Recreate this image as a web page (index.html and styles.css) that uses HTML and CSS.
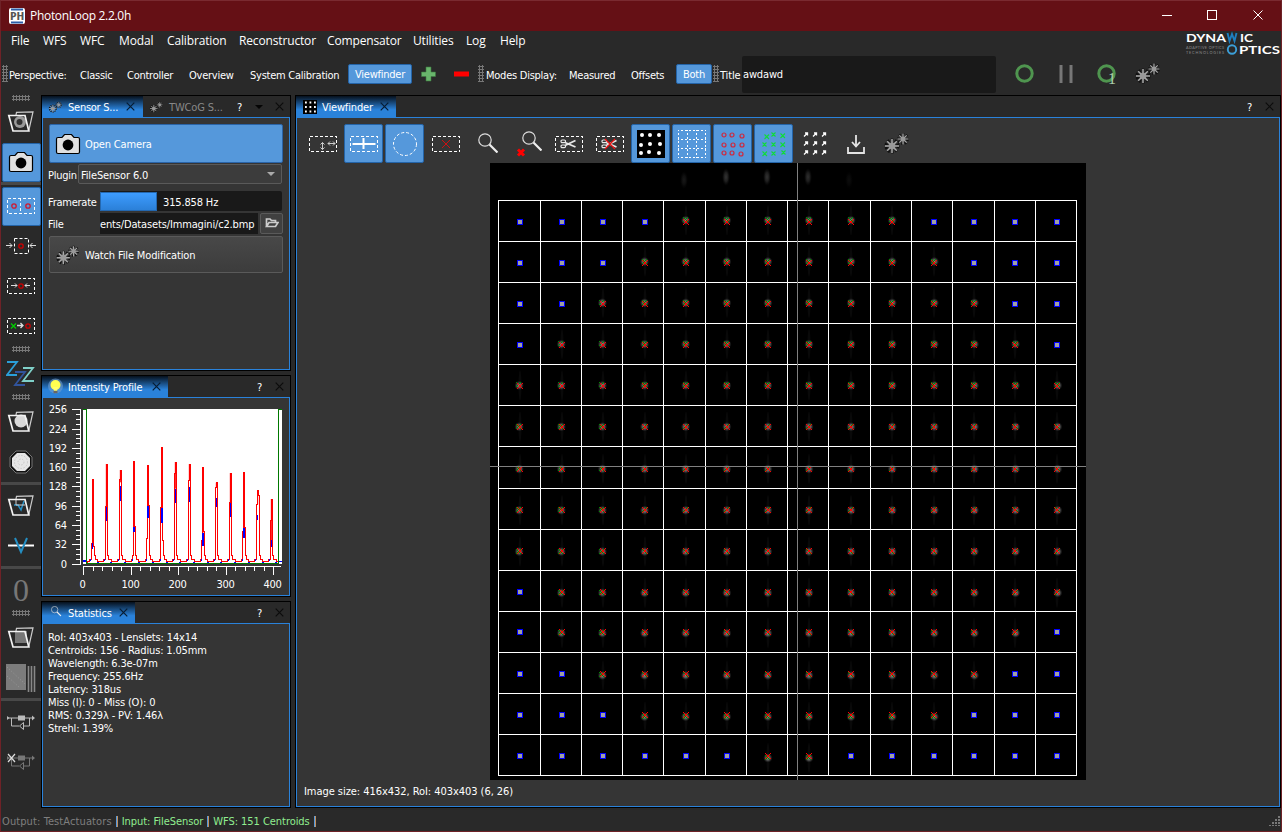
FILE: index.html
```html
<!DOCTYPE html>
<html lang="en">
<head>
<meta charset="utf-8">
<title>PhotonLoop 2.2.0h</title>
<link rel="stylesheet" href="styles.css">
</head>
<body>
<svg class="defs" width="0" height="0" aria-hidden="true">
  <defs>
    <symbol id="gears" viewBox="0 0 28 24">
      <g stroke="#111" fill="none"><circle cx="9" cy="15" r="6" stroke-width="3" stroke-dasharray="2.2 1.6"/><circle cx="20" cy="8" r="4.6" stroke-width="2.6" stroke-dasharray="2 1.4"/></g>
      <g stroke="#aaa" stroke-width="1.5"><path d="M9 8V22M2 15H16M4.2 10.2L13.8 19.8M4.2 19.8L13.8 10.2"/><path d="M20 2.5V13.5M14.5 8H25.500M16.300 4.300L23.700 11.700M16.300 11.700L23.700 4.300" stroke-width="1.2"/></g>
      <circle cx="9" cy="15" r="3.200" fill="#999"/><circle cx="20" cy="8" r="2.200" fill="#999"/>
    </symbol>
    <symbol id="camera" viewBox="0 0 26 22">
      <path d="M3 4.500H7L9.500 1.500H16.500L19 4.500H23Q24.500 4.500 24.500 6V19Q24.500 20.500 23 20.500H3Q1.500 20.500 1.500 19V6Q1.500 4.500 3 4.500Z" fill="#e0e0e0" stroke="#000" stroke-width="1.200"/>
      <circle cx="13" cy="12" r="5.400" fill="#000"/>
    </symbol>
    <symbol id="layers" viewBox="0 0 28 24">
      <path d="M9 5L9.500 2.300L26 1.800L21.800 20.500" fill="none" stroke="#ccc" stroke-width="1.200"/>
      <path d="M1.800 5.500H18L21.800 21H6Z" fill="none" stroke="#f2f2f2" stroke-width="1.700"/>
    </symbol>
    <symbol id="dash" viewBox="0 0 28 16">
      <rect x=".5" y=".5" width="27" height="15" fill="none" stroke="#fff" stroke-dasharray="3 2" shape-rendering="crispEdges"/>
    </symbol>
    <symbol id="lens" viewBox="0 0 20 20">
      <circle cx="7" cy="7" r="6.200" fill="none" stroke="#ddd" stroke-width="1.200"/><path d="M11.500 11.500L19.500 19.500" stroke="#eee" stroke-width="2.200"/>
    </symbol>
    <symbol id="scissors" viewBox="0 0 16 10">
      <path d="M5 3.500L15.500 8M5 6.500L15.500 1.500" stroke="#e8e8e8" stroke-width="1.800"/><rect x="1" y="1" width="4.500" height="2.600" rx="1.200" fill="none" stroke="#e8e8e8" stroke-width="1.200"/><rect x="1" y="6" width="4.500" height="2.600" rx="1.200" fill="none" stroke="#e8e8e8" stroke-width="1.200"/>
    </symbol>
    <symbol id="close" viewBox="0 0 9 9"><path d="M.7 .7L8.300 8.300M8.300 .7L.7 8.300" stroke="currentColor" stroke-width="1.200"/></symbol>
    <symbol id="loop" viewBox="0 0 28 18">
      <path d="M0 5H27M4.500 5V13H12M16 13H22.500V5" fill="none" stroke="currentColor"/><path d="M25 2.500L28 5L25 7.500M0 3L2.500 5L0 7" fill="currentColor"/><rect x="11" y="2.500" width="7" height="5" fill="currentColor"/><path d="M16.500 9.500V16.500L12.500 13Z" fill="#292929" stroke="currentColor"/>
    </symbol>
  </defs>
</svg>
<div class="window">
  <header class="titlebar">
    <svg class="app-icon" width="16" height="16"><rect width="16" height="16" rx="2" fill="#fff"/><path d="M2 1.500H14M2 14.500H14" stroke="#2c5fa8" stroke-width="2"/><text x="1" y="12" font-size="11" font-weight="bold" textLength="14" lengthAdjust="spacingAndGlyphs" fill="#555">PH</text></svg>
    <span class="app-title">PhotonLoop 2.2.0h</span>
    <svg class="win-controls" width="106" height="12" fill="none" stroke="#fff"><path d="M0 5.500H10"/><rect x="45.500" y=".5" width="9" height="9"/><path d="M91.500 .5L100.500 9.500M100.500 .5L91.500 9.500"/></svg>
  </header>

  <div class="top">
    <nav class="menubar"><span>File</span><span>WFS</span><span>WFC</span><span>Modal</span><span>Calibration</span><span>Reconstructor</span><span>Compensator</span><span>Utilities</span><span>Log</span><span>Help</span></nav>
    <svg class="logo" width="96" height="30" viewBox="0 -3 96 30">
      <g fill="#fff" font-size="12" font-weight="bold"><text x="1" y="9.500" textLength="40" lengthAdjust="spacingAndGlyphs">DYNA</text><text x="55" y="9.500" textLength="13" lengthAdjust="spacingAndGlyphs">IC</text><text x="54" y="22" textLength="41" lengthAdjust="spacingAndGlyphs">PTICS</text></g>
      <path d="M42.500 1L44.500 9L47 2L49.500 9L51.500 1" fill="none" stroke="#1e7fc0" stroke-width="1.900"/>
      <circle cx="47" cy="17.500" r="4.200" fill="none" stroke="#3c9fd8" stroke-width="1.900"/>
      <g fill="#8a8a8a" font-size="3.800"><text x="1" y="17" textLength="38">ADAPTIVE OPTICS</text><text x="1" y="21.500" textLength="38">TECHNOLOGIES</text></g>
    </svg>
  </div>

  <div class="toolbar">
    <i class="grip-v"></i>
    <div class="perspectives"><span>Perspective:</span><span>Classic</span><span>Controller</span><span>Overview</span><span>System Calibration</span></div>
    <span class="chip chip-view">Viewfinder</span>
    <svg class="plus-minus" width="50" height="16"><path d="M6 1H11V6H15.500V10.500H11V15H6V10.500H1.500V6H6Z" fill="#69b56c" stroke="#3d7a40" stroke-width=".6"/><rect x="34" y="5.500" width="15" height="5" fill="#f00"/></svg>
    <i class="grip-v"></i>
    <div class="modes"><span>Modes Display:</span><span>Measured</span><span>Offsets</span></div>
    <span class="chip chip-both">Both</span>
    <i class="grip-v"></i>
    <span class="title-label">Title</span>
    <span class="title-input">awdawd</span>
    <svg class="run-icons" width="150" height="28">
      <g fill="none" stroke="#4f954f" stroke-width="3"><circle cx="10.500" cy="13.500" r="7.700"/><circle cx="92.500" cy="13.500" r="7.700"/></g>
      <path d="M47 5V23M57 5V23" stroke="#777" stroke-width="3"/>
      <text x="94" y="24" class="serif" font-size="16" fill="#a9cfa9">1</text>
      <use href="#gears" x="120" y="1" width="28" height="24"/>
    </svg>
  </div>

  <main class="work">
    <aside class="rail">
      <i class="grip-h"></i>
      <div class="slot"><svg width="28" height="24"><circle cx="13" cy="12" r="6" fill="#999"/><circle cx="12.500" cy="12" r="3" fill="#333"/><use href="#layers" width="28" height="24"/></svg></div>
      <div class="slot"><div class="btn-on"><svg width="26" height="22"><use href="#camera"/></svg></div></div>
      <i class="sep"></i>
      <div class="slot"><div class="btn-on"><svg width="28" height="16"><use href="#dash" width="28" height="16"/><path d="M13.500 0V16" stroke="#fff" stroke-dasharray="3 2"/><g fill="none" stroke="#d01830" stroke-width="1.300"><circle cx="7" cy="8" r="2.200"/><circle cx="21" cy="8" r="2.200"/></g></svg></div></div>
      <div class="slot"><svg width="30" height="16"><rect x="8.500" y=".5" width="14" height="15" fill="none" stroke="#fff" stroke-dasharray="3 2"/><circle cx="15" cy="8" r="2.200" fill="none" stroke="#c00" stroke-width="1.300"/><path d="M0 7.500H6M3.500 5L6 7.500L3.500 10M30 7.500H24M26.500 5L24 7.500L26.500 10" fill="none" stroke="#ddd"/></svg></div>
      <div class="slot"><svg width="28" height="16"><use href="#dash" width="28" height="16"/><circle cx="14" cy="8" r="2.200" fill="none" stroke="#c00" stroke-width="1.300"/><path d="M4 7.500H10M8 5.500L10 7.500L8 9.500M23 7.500H18M20 5.500L18 7.500L20 9.500" fill="none" stroke="#ddd"/></svg></div>
      <div class="slot"><svg width="28" height="16"><use href="#dash" width="28" height="16"/><circle cx="21" cy="8" r="2.200" fill="none" stroke="#c00" stroke-width="1.300"/><path d="M4 5.500L9 10.500M9 5.500L4 10.500" stroke="#0c0" stroke-width="1.300"/><path d="M10 7.500H16M13.500 5L16 7.500L13.500 10" fill="none" stroke="#ddd" stroke-width="1.300"/></svg></div>
      <i class="grip-h"></i>
      <div class="slot"><svg width="30" height="28" fill="none" stroke-width="1.800"><path d="M1 3H11L1 16H11" stroke="#2b9fd8"/><path d="M9 13H19L9 26H19" stroke="#31549c"/><path d="M17 9H27L17 22H28" stroke="#7fd0c8"/></svg></div>
      <i class="grip-h gap"></i>
      <div class="slot"><svg width="28" height="24"><circle cx="14" cy="11" r="6.500" fill="#d8d8d8"/><use href="#layers" width="28" height="24"/></svg></div>
      <div class="slot"><svg width="24" height="24"><path d="M7 1H17L23 7V17L17 23H7L1 17V7Z" fill="#111" stroke="#777"/><path d="M8 3H16L21 8V16L16 21H8L3 16V8Z" fill="#e6e6e6"/><g fill="none" stroke="#c8c8c8" stroke-dasharray="1.500 1.500"><circle cx="12" cy="12" r="6.500"/><circle cx="12" cy="12" r="3"/></g></svg></div>
      <i class="sep"></i>
      <div class="slot"><svg width="28" height="24"><path d="M7 11H11L14 16L17 7" fill="none" stroke="#248fc4" stroke-width="1.500"/><path d="M9 11V5M9 11H18" stroke="#ccc"/><use href="#layers" width="28" height="24"/></svg></div>
      <div class="slot"><svg width="26" height="18" fill="none"><path d="M0 8.500H26" stroke="#fff" stroke-width="2"/><path d="M7 1L10 8L13 15L16 8L19 1" stroke="#248fc4" stroke-width="2"/></svg></div>
      <i class="sep"></i>
      <div class="slot zero">0</div>
      <i class="grip-h last"></i>
      <div class="slot"><svg width="28" height="24"><rect x="8" y="5" width="12" height="12" fill="#777"/><use href="#layers" width="28" height="24"/></svg></div>
      <div class="slot"><svg width="30" height="28"><rect width="20" height="26" fill="#7c7c7c"/><path d="M1 3L19 20M1 12L14 24" stroke="#999" stroke-dasharray="1 2"/><path d="M22.500 2V28M25.500 2V28M28.500 2V28" stroke="#888" stroke-width="1.600"/></svg></div>
      <i class="sep"></i>
      <div class="slot loop-on"><svg width="28" height="18"><use href="#loop"/></svg></div>
      <div class="slot loop-off"><svg width="28" height="18"><use href="#loop"/><path d="M1 1L8 9M8 1L1 9" stroke="#ddd" stroke-width="1.200"/></svg></div>
    </aside>

    <div class="side">
      <section class="dock sensor">
        <div class="tabs">
          <div class="tab"><svg width="15" height="14"><use href="#gears"/></svg><span>Sensor S...</span><svg class="x" width="9" height="9"><use href="#close"/></svg></div>
          <div class="tab off"><svg width="15" height="14"><use href="#gears"/></svg><span>TWCoG S...</span></div>
          <span class="help">?</span><i class="drop"></i><svg class="x" width="9" height="9"><use href="#close"/></svg>
        </div>
        <div class="pane">
          <div class="big blue"><svg width="26" height="22"><use href="#camera"/></svg><span>Open Camera</span></div>
          <div class="field plugin"><span>Plugin</span><div class="combo">FileSensor 6.0<i></i></div></div>
          <div class="field rate"><span>Framerate</span><div class="bar"><i></i><b>315.858 Hz</b></div></div>
          <div class="field file"><span>File</span><div class="path">ents/Datasets/Immagini/c2.bmp</div><div class="folder"><svg width="14" height="12"><path d="M1.500 9.500V2H5L6.500 3.500H10.500V5.500M1.500 9.500L4 5.500H13L10.500 9.500Z" fill="none" stroke="#ccc" stroke-width="1.700"/></svg></div></div>
          <div class="big"><svg width="28" height="24"><use href="#gears"/></svg><span>Watch File Modification</span></div>
        </div>
      </section>

      <section class="dock intensity">
        <div class="tabs">
          <div class="tab"><svg width="15" height="18"><circle cx="7.500" cy="8" r="7.500" fill="#6f9fd0" opacity=".6"/><circle cx="7.500" cy="7" r="5" fill="#ffff50"/><path d="M5 9H10L9 13H6Z" fill="#ffff70"/><path d="M5.500 14H9.500" stroke="#666" stroke-width="2.500"/></svg><span>Intensity Profile</span><svg class="x" width="9" height="9"><use href="#close"/></svg></div>
          <span class="help">?</span><svg class="x" width="9" height="9"><use href="#close"/></svg>
        </div>
        <div class="pane"><svg id="profile" width="246" height="196" viewBox="9 84 738 588"></svg></div>
      </section>

      <section class="dock stats">
        <div class="tabs">
          <div class="tab"><svg width="15" height="15"><g transform="translate(3 1) scale(.52)"><use href="#lens" width="20" height="20"/></g></svg><span>Statistics</span><svg class="x" width="9" height="9"><use href="#close"/></svg></div>
          <span class="help">?</span><svg class="x" width="9" height="9"><use href="#close"/></svg>
        </div>
        <div class="pane">
          <p><span>RoI: 403x403 - Lenslets: 14x14</span></p><p><span>Centroids: 156 - Radius: 1.05mm</span></p><p><span>Wavelength: 6.3e-07m</span></p><p><span>Frequency: 255.6Hz</span></p><p><span>Latency: 318us</span></p><p><span>Miss (I): 0 - Miss (O): 0</span></p><p><span>RMS: 0.329λ - PV: 1.46λ</span></p><p><span>Strehl: 1.39%</span></p>
        </div>
      </section>
    </div>

    <section class="dock viewer">
      <div class="tabs">
        <div class="tab"><svg width="14" height="14"><rect width="14" height="14" fill="#000"/><path d="M2 2.500H13M2 7H13M2 11.500H13" stroke="#fff" stroke-width="1.800" stroke-dasharray="1.800 2.700"/></svg><span>Viewfinder</span><svg class="x" width="9" height="9"><use href="#close"/></svg></div>
        <span class="help">?</span><svg class="x" width="9" height="9"><use href="#close"/></svg>
      </div>
      <div class="pane">
        <div class="tools">
          <div class="tool"><svg width="28" height="28"><use href="#dash" y="6" width="28" height="16"/><path d="M13.500 12.500V19.500M11.500 14.500L13.500 12.500L15.500 14.500M11.500 17.500L13.500 19.500L15.500 17.500M19 13.500H26M21 11.500L19 13.500L21 15.500M24 11.500L26 13.500L24 15.500" fill="none" stroke="#ccc"/></svg></div>
          <div class="tool on"><svg width="28" height="28"><use href="#dash" y="6" width="28" height="16"/><path d="M2.500 14H25.500M13.500 8V19" stroke="#fff" stroke-width="2"/></svg></div>
          <div class="tool on"><svg width="28" height="28"><circle cx="14" cy="14" r="11.500" fill="none" stroke="#fff" stroke-dasharray="3 2"/></svg></div>
          <div class="tool"><svg width="28" height="28"><use href="#dash" y="6" width="28" height="16"/><path d="M10 10L18 18M18 10L10 18" stroke="#d01010"/></svg></div>
          <div class="tool"><svg width="28" height="28"><use href="#lens" x="5" y="3" width="20" height="20"/></svg></div>
          <div class="tool"><svg width="28" height="28"><use href="#lens" x="8" y="1" width="20" height="20"/><path d="M4 19.500L10 25.500M10 19.500L4 25.500" stroke="#f00" stroke-width="3"/></svg></div>
          <div class="tool"><svg width="28" height="28"><use href="#dash" y="6" width="28" height="16"/><use href="#scissors" x="5" y="9" width="16" height="10"/></svg></div>
          <div class="tool"><svg width="28" height="28"><use href="#dash" y="6" width="28" height="16"/><use href="#scissors" x="5" y="9" width="16" height="10"/><path d="M9 9L19 19M19 9L9 19" stroke="#f01010" stroke-width="1.300"/></svg></div>
          <div class="tool on"><svg width="28" height="28"><rect width="28" height="28" fill="#000"/><g fill="#fff"><circle cx="5" cy="5" r="2"/><circle cx="13" cy="5" r="2"/><circle cx="22" cy="5" r="2"/><circle cx="4" cy="15" r="2"/><circle cx="13" cy="14" r="2"/><circle cx="23" cy="14" r="2"/><circle cx="4" cy="23" r="2"/><circle cx="12" cy="22" r="2"/><circle cx="22" cy="23" r="2"/></g></svg></div>
          <div class="tool on"><svg width="28" height="28"><path d="M0 .5H28M0 9.500H28M0 18.500H28M0 27.500H28M.5 0V28M9.500 0V28M18.500 0V28M27.500 0V28" stroke="#fff" stroke-dasharray="2 2" stroke-dashoffset="1" shape-rendering="crispEdges"/></svg></div>
          <div class="tool on"><svg width="28" height="28" fill="none" stroke="#d0283c" stroke-width="1.200"><circle cx="5" cy="5" r="2"/><circle cx="13" cy="5" r="2"/><circle cx="23" cy="6" r="2"/><circle cx="5" cy="15" r="2"/><circle cx="14" cy="15" r="2"/><circle cx="23" cy="15" r="2"/><circle cx="5" cy="23" r="2"/><circle cx="13" cy="23" r="2"/><circle cx="22" cy="24" r="2"/></svg></div>
          <div class="tool on"><svg width="28" height="28"><path d="M4.500 4.500L9 9M9 4.500L4.500 9M11.500 2.500L15.500 6.500M15.500 2.500L11.500 6.500M20.500 3.500L25 8M25 3.500L20.500 8M2.500 12.500L6.500 16.500M6.500 12.500L2.500 16.500M11.500 12.500L15.500 16.500M15.500 12.500L11.500 16.500M20.500 12.500L25 17M25 12.500L20.500 17M2.500 21.500L7 26M7 21.500L2.500 26M11.500 21.500L15.500 25.500M15.500 21.500L11.500 25.500M21.500 20.500L25.500 24.500M25.500 20.500L21.500 24.500" stroke="#10dc38" stroke-width="1.100"/></svg></div>
          <div class="tool"><svg width="28" height="28"><g fill="none" stroke="#fff" stroke-width="1.300"><path d="M3 6.500L6 3.500M4 3H6.500V5.500M12 6.500L15 3.500M13 3H15.500V5.500M21 6.500L24 3.500M22 3H24.500V5.500"/><path d="M3 15.500L6 12.500M4 12H6.500V14.500M12 15.500L15 12.500M13 12H15.500V14.500M21 15.500L24 12.500M22 12H24.500V14.500"/><path d="M3 24.500L6 21.500M4 21H6.500V23.500M12 24.500L15 21.500M13 21H15.500V23.500M21 24.500L24 21.500M22 21H24.500V23.500"/></g></svg></div>
          <div class="tool"><svg width="28" height="28" fill="none" stroke="#e4e4e4" stroke-width="1.800"><path d="M14 5V17M10 12L14 16.500L18 12M6 17V23H22V17"/></svg></div>
          <div class="tool"><svg width="28" height="28"><use href="#gears" y="1" width="28" height="24"/></svg></div>
        </div>
        <div class="stage"><svg id="sensor" width="596" height="617" viewBox="490 163 596 617"></svg></div>
        <div class="caption"><span>Image size: 416x432, RoI: 403x403 (6, 26)</span></div>
      </div>
    </section>
  </main>

  <footer class="status"><span class="muted">Output: TestActuators</span><i></i><span>Input: FileSensor</span><i></i><span>WFS: 151 Centroids</span><i></i><svg class="resize" width="12" height="12"><path d="M10 1V11M7 4V11M4 7V11M1 10V11" stroke="#777" stroke-width="2" stroke-dasharray="2 1"/></svg></footer>
</div>
<script src="plots.js"></script>
</body>
</html>
```

FILE: styles.css
```css
* { box-sizing: border-box; }
body { margin: 0; background: #292929; }
.defs { position: absolute; }
svg { display: block; flex: none; font-family: "Open Sans", sans-serif; }
p { margin: 0; }

.window {
  width: 1282px; height: 832px; overflow: hidden;
  display: flex; flex-direction: column;
  border: 1px solid #6e2227; border-top-color: #7a2a30;
  background: #292929; color: #fff;
  font: 11px/13px "DejaVu Sans Condensed", "DejaVu Sans", sans-serif;
  font-stretch: condensed;
  letter-spacing: -0.15px;
  white-space: nowrap;
}

.titlebar { height: 30px; background: #651015; display: flex; align-items: center; padding: 0 13px 0 8px; flex: none; }
.app-title { margin-left: 5px; font: 12px/16px "Open Sans", sans-serif; letter-spacing: -0.3px; }
.win-controls { margin-left: auto; }

.top { height: 21px; display: flex; justify-content: space-between; flex: none; }
.menubar {
  display: grid; align-items: center; padding-left: 10px; height: 20px;
  grid-template-columns: 32px 37px 39px 48px 72px 88px 86px 53px 34px 40px;
  font: 12px/16px "Open Sans", sans-serif; letter-spacing: -0.15px;
}
.logo { margin: -2px 0 -7px; font-family: "Lato", sans-serif; letter-spacing: 0; overflow: visible; }

.toolbar { height: 43px; flex: none; display: flex; align-items: center; padding-left: 1px; }
.toolbar span { padding-top: 3px; }
.grip-v { width: 6px; height: 17px; background: radial-gradient(circle, #777 1px, transparent 1.2px) 0 0 / 3px 3px; }
.perspectives { display: grid; grid-template-columns: 71px 47px 62px 61px 98px; padding-left: 1px; letter-spacing: -0.25px; }
.toolbar .chip { height: 20px; line-height: 19px; padding: 0; margin-top: 1px; text-align: center; background: #5598db; border: 1px solid #2464a8; border-radius: 2px; letter-spacing: -0.25px; }
.chip-view { width: 64px; }
.plus-minus { margin: 0 8px 0 8px; }
.modes { display: grid; grid-template-columns: 83px 62px 46px; padding-left: 2px; letter-spacing: -0.25px; }
.toolbar .chip-both { width: 36px; margin-left: -1px; margin-right: 1px; }
.title-label { width: 22px; margin-left: 1px; }
.toolbar .title-input { width: 254px; height: 37px; line-height: 38px; background: #191919; border-radius: 2px; padding: 0 0 0 1px; margin-top: 1px; }
.run-icons { margin-left: 18px; margin-top: 1px; }
.serif { font-family: "Liberation Serif", serif; }

.work { flex: 1; display: flex; min-height: 0; }
.rail { width: 40px; display: flex; flex-direction: column; align-items: center; }
.grip-h { width: 18px; height: 6px; margin-bottom: 1px; flex: none; background: radial-gradient(circle, #777 1px, transparent 1.2px) 0 0 / 3px 3px; }
.grip-h.gap { margin: 1px 0 2px; }
.grip-h.last { margin: 0 0 2px; }
.slot { height: 40px; width: 40px; flex: none; display: flex; align-items: center; justify-content: center; }
.sep { width: 40px; height: 3px; margin-bottom: 1px; background: #484848; flex: none; }
.btn-on { width: 39px; height: 39px; display: flex; align-items: center; justify-content: center; background: #5598db; border: 1px solid #2464a8; border-radius: 2px; }
.zero { font: 32px/38px "Liberation Serif", serif; color: #777; }
.loop-on { color: #bbb; }
.loop-off { color: #777; }

.side { width: 250px; margin-right: 4px; display: flex; flex-direction: column; gap: 4px; }
.dock { border: 1px solid #000; display: flex; flex-direction: column; flex: none; }
.sensor { height: 276px; }
.intensity { height: 222px; }
.stats { height: 207px; }
.viewer { width: 986px; height: 713px; }
.tabs { height: 21px; display: flex; align-items: center; padding-right: 6px; flex: none; }
.tabs span { padding-top: 2px; }
.tab { height: 21px; display: flex; align-items: center; padding: 0 7px 0 6px; background: linear-gradient(#06101c 0, #2a82da 65%); }
.tab span { margin-left: 5px; width: 52px; }
.tab .x { margin: 0 0 0 auto; color: #071c33; }
.sensor .tab:first-child { width: 101px; padding-right: 8px; letter-spacing: -0.25px; }
.tab.off { background: none; color: #888; }
.tab.off span { width: 60px; }
.intensity .tab { width: 126px; }
.intensity .tab span { width: 78px; }
.stats .tab { width: 93px; }
.viewer .tab { width: 100px; padding-left: 7px; }
.tabs > .x { color: #0c0c0c; margin-left: 13px; }
.help { margin-left: auto; }
.drop { border: 4px solid transparent; border-top-color: #050505; border-bottom: 0; margin-left: 13px; }
.sensor .tabs > .x { margin-left: 12px; }
.pane { flex: 1; border: 1px solid #2a82da; background: #353535; min-height: 0; }

.sensor .pane { padding: 6px; display: flex; flex-direction: column; }
.big { height: 37px; flex: none; display: flex; align-items: center; padding-left: 5px; gap: 4px; width: 234px; border: 1px solid #5a5a5a; border-radius: 2px; background: linear-gradient(#484848, #3c3c3c); }
.big svg { width: 26px; }
.big span { padding-top: 2px; }
.big.blue { height: 39px; background: #5598db; border-color: #2a64a8; }
.field { display: flex; align-items: center; flex: none; }
.field span { padding-top: 2px; margin-left: -1px; letter-spacing: -0.25px; }
.combo { display: flex; align-items: center; justify-content: space-between; width: 204px; height: 20px; border: 1px solid #5a5a5a; border-radius: 2px; padding: 2px 6px 0 2px; background: #3c3c3c; }
.combo i { border: 4px solid transparent; border-top-color: #aaa; border-bottom: 0; margin-top: -2px; }
.plugin { margin: 1px 0 7px; height: 20px; }
.plugin span { width: 30px; }
.rate { height: 20px; }
.rate span { width: 52px; }
.bar { width: 182px; height: 20px; display: flex; align-items: center; background: #191919; border-radius: 2px; }
.bar i { width: 57px; height: 19px; margin-right: 6px; background: linear-gradient(#3d9cff, #2b80d8); border: 1px solid #2468b0; }
.bar b { font-weight: normal; padding-top: 2px; }
.file { margin: 1px 0 2px; height: 22px; }
.file span { width: 52px; }
.path { width: 158px; height: 21px; line-height: 23px; background: #191919; text-align: right; padding-right: 5px; overflow: hidden; }
.folder { width: 23px; height: 21px; margin-left: 2px; border: 1px solid #5a5a5a; border-radius: 2px; background: #404040; display: flex; align-items: center; justify-content: center; }

.stats .pane { padding: 7px 5px; }

.viewer .pane { display: flex; flex-direction: column; }
.tools { display: flex; gap: 2px; padding: 6px 0 0 6px; height: 45px; }
.tool { width: 39px; height: 39px; display: flex; align-items: center; justify-content: center; border-radius: 2px; }
.tool.on { background: #5598db; border: 1px solid #2464a8; }
.stage { padding-left: 193px; }
.caption { padding: 5px 7px; letter-spacing: -0.05px; }

.status { height: 23px; display: flex; align-items: center; padding: 3px 0 0 1px; color: #90ee90; flex: none; }
.status i { width: 2px; height: 11px; margin: 0 4px; background: #5598db; border-right: 1px solid #c09060; }
.status span { letter-spacing: -0.05px; }
.status .muted { color: #7f7f7f; letter-spacing: 0.1px; }
.resize { margin-left: auto; }
```

FILE: plots.js
```javascript
const NS = 'http://www.w3.org/2000/svg';
function add(parent, name, attrs, text) {
  const el = document.createElementNS(NS, name);
  for (const key in attrs) el.setAttribute(key, attrs[key]);
  if (text !== undefined) el.textContent = text;
  parent.appendChild(el);
  return el;
}

// A cross made of single-pixel squares, size pixels wide.
function pixelCross(x, y, size) {
  let d = '';
  for (let i = 0; i < size; i++) {
    d += `M${x + i} ${y + i}h1v1h-1z`;
    if (i !== size - 1 - i) d += `M${x + size - 1 - i} ${y + i}h1v1h-1z`;
  }
  return d;
}

// Sensor image: lenslet grid, reference points and centroids.
const sensor = document.getElementById('sensor');
add(sensor, 'rect', { x: 490, y: 163, width: 596, height: 617, fill: '#000' });
const defs = add(sensor, 'defs', {});
const glow = add(defs, 'radialGradient', { id: 'glow' });
add(glow, 'stop', { offset: '0', 'stop-color': '#ccc' });
add(glow, 'stop', { offset: '.5', 'stop-color': '#777' });
add(glow, 'stop', { offset: '1', 'stop-color': '#333', 'stop-opacity': 0 });
const colLines = [498, 540, 581, 622, 663, 705, 746, 787, 828, 870, 911, 952, 994, 1035, 1076];
const rowLines = [200, 241, 282, 323, 364, 405, 446, 488, 529, 570, 611, 652, 693, 734, 775];
const colMarks = [520, 562, 603, 645, 686, 727, 768, 809, 851, 892, 934, 974, 1015, 1057];
const rowMarks = [222, 263, 304, 345, 386, 427, 469, 510, 551, 592, 632, 674, 715, 756];
const active = [[4, 9], [3, 10], [2, 11], [1, 12], [0, 13], [0, 13], [0, 13], [0, 13], [0, 13], [1, 13], [1, 12], [2, 11], [3, 10], [6, 7]];
[[684, 180, .12], [726, 177, .25], [767, 177, .25], [808, 177, .23], [849, 180, .06]].forEach(([x, y, o]) =>
  add(sensor, 'ellipse', { cx: x, cy: y, rx: 4, ry: 9, fill: 'url(#glow)', opacity: o }));
let lines = '';
colLines.forEach(x => { lines += `M${x + .5} 200V776`; });
rowLines.forEach(y => { lines += `M498 ${y + .5}H1077`; });
add(sensor, 'path', { d: lines, stroke: '#fff', 'shape-rendering': 'crispEdges' });
active.forEach(([first, last], row) => {
  for (let col = 0; col < 14; col++) {
    const x = colMarks[col], y = rowMarks[row];
    const dx = (col - 7) * .12, dy = (row - 6) * .28;
    if (col >= first && col <= last) {
      add(sensor, 'ellipse', { cx: x, cy: y + dy, rx: 1.5, ry: 15, fill: '#fff', opacity: .035 });
      add(sensor, 'circle', { cx: x + dx, cy: y + dy, r: 4.8, fill: 'url(#glow)', opacity: .65 });
      const gx = x + Math.round(dx), gy = y + Math.round(dy);
      add(sensor, 'path', { d: pixelCross(gx - 3, gy - 3, 5), fill: '#008c00' });
      add(sensor, 'path', { d: pixelCross(x - 3, y - 3, 6), fill: '#f00' });
    } else {
      add(sensor, 'rect', { x: x - 2.5, y: y - 2.5, width: 5, height: 5, fill: '#a0a0a4', stroke: '#00f' });
    }
  }
});
add(sensor, 'path', { d: 'M797.5 163V780M490 466.5H1086', stroke: '#808080' });

// Intensity profile: axes and stepped curves, drawn at three units per pixel.
const profile = document.getElementById('profile');
add(profile, 'rect', { x: 129, y: 117, width: 597, height: 465, fill: '#fff' });
const label = { fill: '#fff', 'font-size': 33, 'font-family': 'DejaVu Sans Condensed, DejaVu Sans', 'font-stretch': 'condensed', 'letter-spacing': -1 };
let ticks = 'M121.5 117V582M129 589.5H723';
for (let i = 0; i <= 32; i++) {
  const y = Math.round((580.5 - i * 14.44) / 3) * 3 + 1.5 - 3;
  ticks += `M123 ${y + 1.5}H${i % 4 ? 108 : 96}`;
  if (i % 4 === 0) add(profile, 'text', { ...label, x: 80, y: y + 14, 'text-anchor': 'end' }, i * 8);
}
for (let i = 0; i <= 20; i++) {
  const x = Math.round((129 + i * 28.5) / 3) * 3 + 1.5;
  ticks += `M${x} 589V${i % 5 ? 603 : 615}`;
  if (i % 5 === 0) add(profile, 'text', { ...label, x: x - 3, y: 654, 'text-anchor': 'middle' }, i * 20);
}
add(profile, 'path', { d: ticks, stroke: '#fff', 'stroke-width': 3, fill: 'none', 'shape-rendering': 'crispEdges' });

const peaks = [
  [158, 328, 520, 530, 518, 536], [199, 282, 409, 316, 412, 452], [241, 300, 327, 337, 348, 392],
  [282, 273, 555, 468, 472, 485], [324, 286, 505, 407, 408, 443], [366, 231, 411, 510, 413, 460],
  [406, 276, 309, 356, 358, 400], [448, 282, 330, 320, 350, 397], [489, 291, 512, 484, 488, 527],
  [529, 338, 352, 352, 385, 410], [571, 309, 398, 337, 400, 440], [612, 306, 484, 472, 475, 505],
  [653, 362, 403, 376, 436, 449], [694, 387, 450, 510, 510, 530]
];
let red = 'M141 576', blue = 'M129 573H138V577', base = '', solid = '';
peaks.forEach(([x, top, left, right, b0, b1]) => {
  red += `H${x - 15}V573H${x - 9}V567H${x - 4}V${left}H${x - 1}V${top}H${x + 2}V${right}H${x + 4}V555H${x + 7}V567H${x + 14}V573H${x + 20}`;
  blue += `M${x} ${b0}V${b1}`;
  base += `M${x - 6} 567V573M${x + 12} 576H${x + 18}`;
  solid += `M${x} ${top}V${Math.max(left, right) > 450 ? b0 : Math.max(left, right)}`;
});
add(profile, 'path', { d: red + 'H711', stroke: '#f00', 'stroke-width': 3, fill: 'none', 'shape-rendering': 'crispEdges' });
add(profile, 'path', { d: solid, stroke: '#f00', 'stroke-width': 3, fill: 'none' });
add(profile, 'path', { d: blue, stroke: '#00f', 'stroke-width': 4.5, fill: 'none', 'shape-rendering': 'crispEdges' });
add(profile, 'path', { d: base + 'M717 575H726', stroke: '#00f', 'stroke-width': 3, fill: 'none', 'shape-rendering': 'crispEdges' });
add(profile, 'path', { d: 'M129 118.500H139.500V580.500H715.500V118.500H726', stroke: '#007800', 'stroke-width': 3, fill: 'none', 'shape-rendering': 'crispEdges' });
```
